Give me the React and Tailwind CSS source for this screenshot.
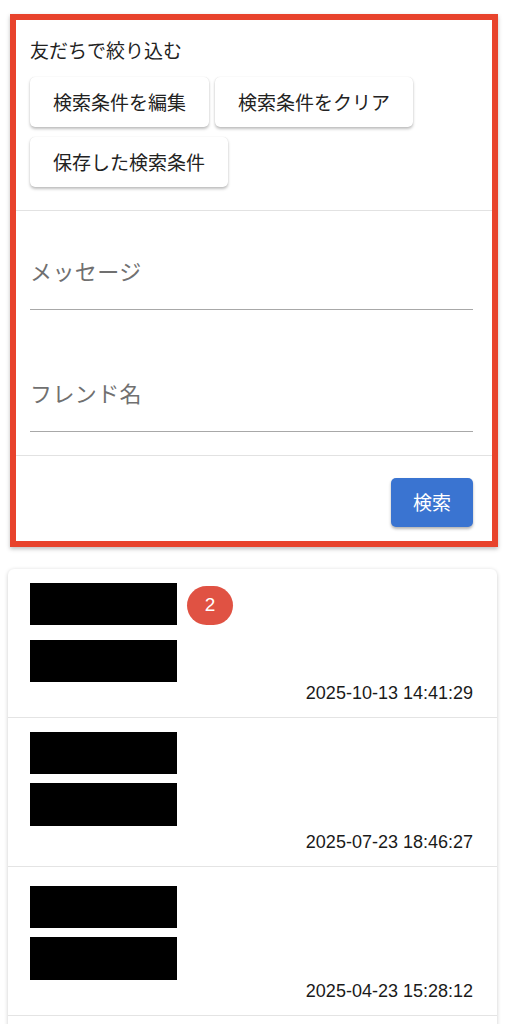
import React from "react";

const jp = { fontFamily: '"Noto Sans CJK JP", "Noto Sans", sans-serif' };

const items = [
  {
    pad: "pt-[14px]",
    r1: "h-[42px]",
    gap: "mt-[15px]",
    r2: "h-[42px]",
    badge: 2,
    time: "2025-10-13 14:41:29",
  },
  {
    pad: "pt-[14px]",
    r1: "h-[42px]",
    gap: "mt-[9px]",
    r2: "h-[43px]",
    time: "2025-07-23 18:46:27",
  },
  {
    pad: "pt-[19px]",
    r1: "h-[42px]",
    gap: "mt-[9px]",
    r2: "h-[43px]",
    time: "2025-04-23 15:28:12",
  },
  {
    pad: "pt-[14px]",
    r1: "h-[42px]",
    gap: "mt-[9px]",
    r2: "h-[43px]",
    time: "",
  },
];

function OutlineButton({ children }) {
  return (
    <button className="h-[50px] px-[23px] rounded-[5px] bg-white text-[19px] text-[#222] shadow-[0_2px_3px_rgba(0,0,0,0.25),0_0_1px_rgba(0,0,0,0.15)]">
      {children}
    </button>
  );
}

function Field({ label, top }) {
  return (
    <div className={`${top} border-b border-[#a8a8a8]`}>
      <div className="text-[22px] leading-[28px] pb-[25px] text-[#707070] tracking-[0.4px]">
        {label}
      </div>
    </div>
  );
}

function FilterCard() {
  return (
    <div className="ml-[10px] mr-[12px] mt-[14px] border-[6px] border-[#e8432c] bg-white shadow-[0_2px_4px_rgba(0,0,0,0.25)]" style={jp}>
      <div className="pl-[14px] pr-[19px] pt-[18px] pb-[23px]">
        <div className="text-[19px] leading-[24px] text-[#222]">友だちで絞り込む</div>
        <div className="mt-[15px] flex flex-wrap gap-x-[6px] gap-y-[10px]">
          <OutlineButton>検索条件を編集</OutlineButton>
          <OutlineButton>検索条件をクリア</OutlineButton>
          <OutlineButton>保存した検索条件</OutlineButton>
        </div>
      </div>
      <div className="border-t border-[#e2e2e2] pl-[14px] pr-[19px] pb-[23px]">
        <Field label="メッセージ" top="pt-[45px]" />
        <Field label="フレンド名" top="pt-[68px]" />
      </div>
      <div className="border-t border-[#e2e2e2] pl-[14px] pr-[19px] pt-[22px] pb-[14px] flex justify-end">
        <button className="h-[49px] px-[22px] rounded-[5px] bg-[#3a74d1] text-white text-[19px] shadow-[0_2px_3px_rgba(0,0,0,0.3)]">
          検索
        </button>
      </div>
    </div>
  );
}

function ListCard() {
  return (
    <div className="ml-[8px] mr-[13px] mt-[22px] rounded-[6px] bg-white shadow-[0_1px_4px_rgba(0,0,0,0.2)] overflow-hidden">
      {items.map((it, i) => (
        <div key={i} className={`h-[149px] border-b border-[#e4e4e4] pl-[22px] pr-[24px] ${it.pad} flex flex-col`}>
          <div className="flex items-center">
            <div className={`w-[147px] ${it.r1} bg-black`} />
            {it.badge && (
              <div className="ml-[10px] mt-[3px] w-[46px] h-[39px] rounded-full bg-[#e05243] flex items-center justify-center text-white text-[19px]" style={{ fontFamily: '"Liberation Sans", Arial, sans-serif' }}>
                {it.badge}
              </div>
            )}
          </div>
          <div className={`w-[147px] ${it.r2} ${it.gap} bg-black`} />
          <div className="mt-auto pb-[13px] text-right text-[18px] leading-[22px] text-[#1a1a1a]" style={{ fontFamily: '"Liberation Sans", Arial, sans-serif' }}>
            {it.time}
          </div>
        </div>
      ))}
    </div>
  );
}

export default function App() {
  return (
    <div className="w-[510px] h-[1024px] bg-white overflow-hidden">
      <FilterCard />
      <ListCard />
    </div>
  );
}
